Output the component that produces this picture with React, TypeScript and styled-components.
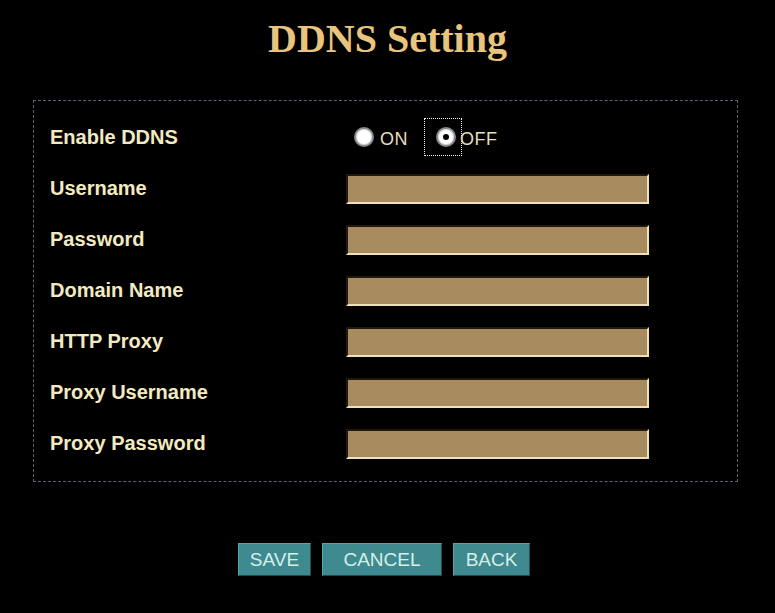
import React from "react";
import styled, { createGlobalStyle } from "styled-components";

const Global = createGlobalStyle`
  html, body { margin: 0; padding: 0; background: #000; }
  body { font-family: "Liberation Sans", Arial, sans-serif; }
`;

const Page = styled.div`
  width: 775px;
  height: 613px;
  background: #000;
  display: flex;
  flex-direction: column;
  align-items: center;
  overflow: hidden;
`;

const Title = styled.h1`
  margin: 16px 0 0 0;
  height: 46px;
  line-height: 46px;
  font-family: "Liberation Serif", "Times New Roman", serif;
  font-weight: bold;
  font-size: 40px;
  color: #e9c47e;
`;

const Panel = styled.div`
  box-sizing: border-box;
  margin-top: 38px;
  align-self: flex-start;
  margin-left: 33px;
  width: 705px;
  height: 382px;
  border: 1px dashed #5c6274;
  padding: 11px 0 0 16px;
  display: grid;
  grid-template-columns: 296px 304px;
  grid-auto-rows: 51px;
`;

const Label = styled.div`
  display: flex;
  align-items: center;
  font-size: 20px;
  font-weight: bold;
  color: #f3eac2;
  letter-spacing: 0px;
`;

const Field = styled.div`
  display: flex;
  align-items: center;
`;

const TextBox = styled.input`
  box-sizing: border-box;
  width: 303px;
  height: 30px;
  margin-top: 0;
  background: #a88b5e;
  border-style: solid;
  border-width: 2px;
  border-color: #1e180e #efe2b6 #efe2b6 #1e180e;
  outline: none;
  padding: 0 4px;
  font-family: "Liberation Sans", Arial, sans-serif;
  font-size: 16px;
`;

const RadioGroup = styled.div`
  display: flex;
  align-items: center;
  margin-top: -2px;
  padding-left: 8px;
`;

const RadioOption = styled.label`
  display: flex;
  align-items: center;
  gap: 6px;
  color: #e6dfc0;
  font-size: 18px;
  cursor: pointer;
`;

const FocusFrame = styled.span<{ $focused?: boolean }>`
  box-sizing: border-box;
  width: ${(p) => (p.$focused ? "38px" : "auto")};
  height: ${(p) => (p.$focused ? "38px" : "auto")};
  border: ${(p) => (p.$focused ? "1px dotted #f0f0f0" : "none")};
  display: flex;
  align-items: center;
  justify-content: flex-end;
  padding-right: ${(p) => (p.$focused ? "5px" : "0")};
  margin-left: ${(p) => (p.$focused ? "16px" : "0")};
`;

const Dot = styled.span<{ $checked?: boolean }>`
  box-sizing: border-box;
  width: 20px;
  height: 20px;
  border-radius: 50%;
  background: #fff;
  border: 2px solid #8a8a8a;
  box-shadow: inset 0 0 0 1px #d8d8d8;
  position: relative;
  &::after {
    content: "";
    display: ${(p) => (p.$checked ? "block" : "none")};
    position: absolute;
    left: 50%;
    top: 50%;
    width: 6px;
    height: 6px;
    margin: -3px 0 0 -3px;
    border-radius: 50%;
    background: #000;
  }
`;

const OptText = styled.span<{ $tight?: boolean }>`
  margin-left: ${(p) => (p.$tight ? "-8px" : "0")};
  padding-top: 6px;
  letter-spacing: 0.5px;
`;

const Buttons = styled.div`
  margin-top: 61px;
  display: flex;
  gap: 11px;
  margin-left: -7px;
`;

const Btn = styled.button<{ $w: number }>`
  box-sizing: border-box;
  width: ${(p) => p.$w}px;
  height: 33px;
  background: #3e8a8f;
  border: 1px solid;
  border-color: #5aa4a8 #1f4c50 #1f4c50 #5aa4a8;
  color: #d6efe9;
  font-family: "Liberation Sans", Arial, sans-serif;
  font-size: 19px;
  padding: 0;
  cursor: pointer;
`;

const fields = [
  "Username",
  "Password",
  "Domain Name",
  "HTTP Proxy",
  "Proxy Username",
  "Proxy Password",
];

export default function App() {
  return (
    <Page>
      <Global />
      <Title>DDNS Setting</Title>
      <Panel>
        <Label>Enable DDNS</Label>
        <Field>
          <RadioGroup>
            <RadioOption>
              <Dot />
              <OptText>ON</OptText>
            </RadioOption>
            <RadioOption>
              <FocusFrame $focused>
                <Dot $checked />
              </FocusFrame>
              <OptText $tight>OFF</OptText>
            </RadioOption>
          </RadioGroup>
        </Field>
        {fields.map((f) => (
          <React.Fragment key={f}>
            <Label>{f}</Label>
            <Field>
              <TextBox type={f.includes("Password") ? "password" : "text"} />
            </Field>
          </React.Fragment>
        ))}
      </Panel>
      <Buttons>
        <Btn $w={73}>SAVE</Btn>
        <Btn $w={120}>CANCEL</Btn>
        <Btn $w={77}>BACK</Btn>
      </Buttons>
    </Page>
  );
}
